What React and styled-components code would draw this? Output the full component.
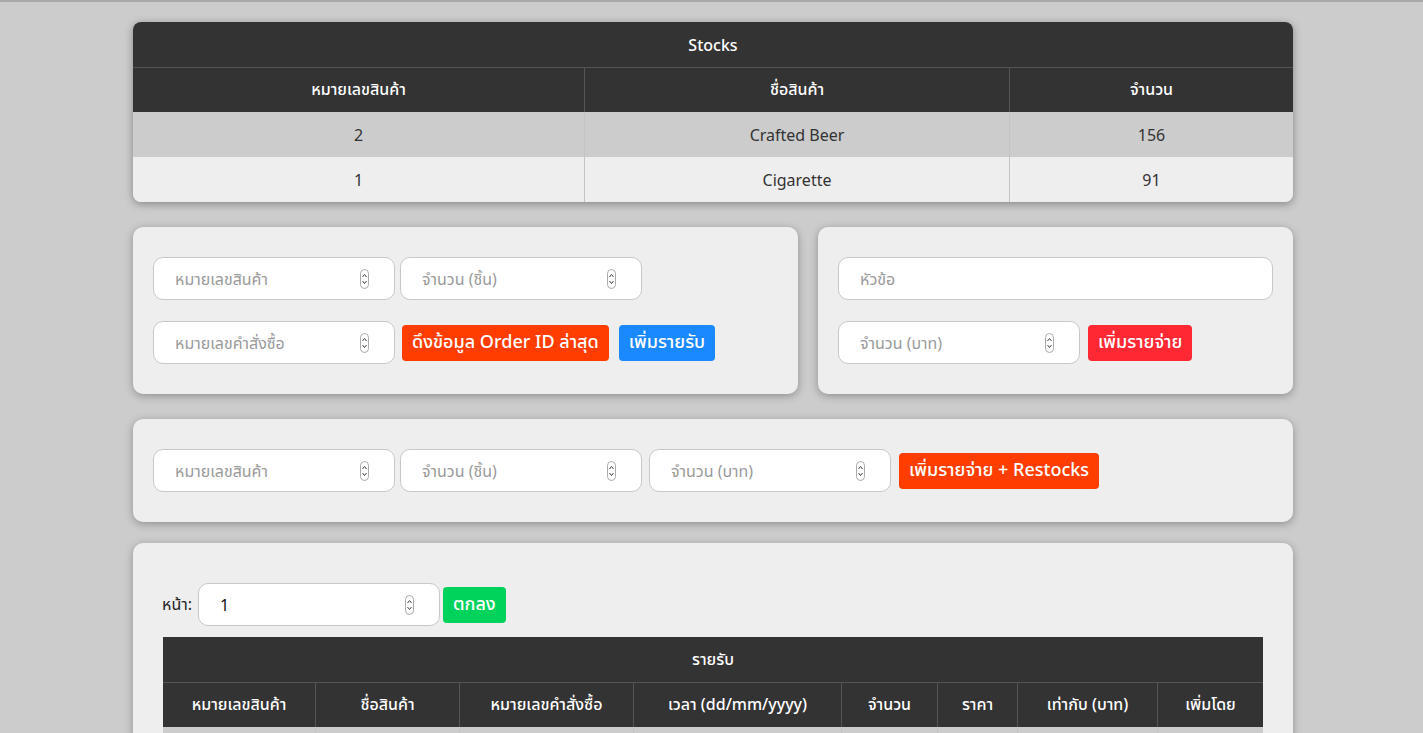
import styled, { createGlobalStyle } from "styled-components";

const GlobalStyle = createGlobalStyle`
  body {
    margin: 0;
    background: #cccccc;
    font-family: "Noto Sans", "Noto Sans Thai", "DejaVu Sans", sans-serif;
    color: #333;
  }
  * { box-sizing: border-box; }
`;

const TopLine = styled.div`
  height: 2px;
  background: #a9a9a9;
`;

const Page = styled.div`
  width: 1160px;
  margin: 20px auto 0 133px;
  display: flex;
  flex-direction: column;
  gap: 25px;
  padding-bottom: 40px;
`;

const Table = styled.table`
  width: 100%;
  border-collapse: separate;
  border-spacing: 0;
  border-radius: ${(p) => (p.$round ? "8px" : "0")};
  overflow: hidden;
  box-shadow: ${(p) => (p.$shadow ? "0 2px 8px rgba(0,0,0,0.35)" : "none")};
  font-size: 16px;
  text-align: center;
`;

const Th = styled.th`
  background: #333333;
  color: #fff;
  font-weight: 500;
  height: 45px;
  padding: 0 8px;
  border-top: ${(p) => (p.$first ? "none" : "1px solid #555")};
  border-left: ${(p) => (p.$edge ? "none" : "1px solid #555")};
  white-space: nowrap;
`;

const Td = styled.td`
  height: 45px;
  background: ${(p) => (p.$odd ? "#cccccc" : "#eeeeee")};
  border-left: ${(p) => (p.$edge ? "none" : "1px solid #c4c4c4")};
  color: #333;
`;

const Row = styled.div`
  display: flex;
  gap: 20px;
`;

const Card = styled.div`
  flex: ${(p) => p.$flex || "1"};
  margin-top: ${(p) => p.$mt || "0"};
  background: #eeeeee;
  border-radius: 10px;
  box-shadow: 0 2px 8px rgba(0, 0, 0, 0.3);
  padding: ${(p) => p.$pad || "30px 20px"};
  display: flex;
  flex-direction: column;
  gap: ${(p) => p.$gap || "21px"};
`;

const Line = styled.div`
  display: flex;
  align-items: center;
  gap: ${(p) => p.$gap || "6px"};
`;

const Field = styled.label`
  width: ${(p) => p.$w || "242px"};
  height: 43px;
  flex-shrink: 0;
  background: #fff;
  border: 1px solid #c8c8c8;
  border-radius: 10px;
  display: flex;
  align-items: center;
  padding: 0 25px 0 19px;
  margin-left: ${(p) => p.$ml || "0"};
`;

const Input = styled.input`
  flex: 1;
  min-width: 0;
  border: none;
  outline: none;
  background: transparent;
  font-family: inherit;
  font-size: 16px;
  color: #111;
  &::placeholder { color: #9a9a9a; }
`;

const Button = styled.button`
  height: 36px;
  border: none;
  border-radius: 4px;
  padding: 0 10px;
  margin-left: ${(p) => p.$ml || "0"};
  background: ${(p) => p.$bg};
  color: #fff;
  font-family: inherit;
  font-size: 18px;
  font-weight: 500;
  white-space: nowrap;
  cursor: pointer;
`;

const Label = styled.span`
  font-size: 16px;
  color: #222;
  margin-right: 6px;
`;

function Spinner() {
  return (
    <svg width="9" height="20" viewBox="0 0 9 20" fill="none">
      <rect x="0.5" y="0.5" width="8" height="19" rx="4" stroke="#aaa" fill="#fff" />
      <path d="M2.5 8 L4.5 5.5 L6.5 8" stroke="#444" strokeWidth="1" />
      <path d="M2.5 12 L4.5 14.5 L6.5 12" stroke="#444" strokeWidth="1" />
    </svg>
  );
}

function NumField({ placeholder, w, ml, value }) {
  return (
    <Field $w={w} $ml={ml}>
      <Input type="text" placeholder={placeholder} defaultValue={value} />
      <Spinner />
    </Field>
  );
}

const stocks = [
  { id: 2, name: "Crafted Beer", qty: 156 },
  { id: 1, name: "Cigarette", qty: 91 },
];

const incomeCols = [
  ["หมายเลขสินค้า", 152],
  ["ชื่อสินค้า", 144],
  ["หมายเลขคำสั่งซื้อ", 174],
  ["เวลา (dd/mm/yyyy)", 208],
  ["จำนวน", 96],
  ["ราคา", 80],
  ["เท่ากับ (บาท)", 140],
  ["เพิ่มโดย", 106],
];

export default function App() {
  return (
    <>
      <GlobalStyle />
      <TopLine />
      <Page>
        <Table $round $shadow>
          <colgroup>
            <col style={{ width: 451 }} />
            <col style={{ width: 425 }} />
            <col style={{ width: 284 }} />
          </colgroup>
          <thead>
            <tr>
              <Th colSpan={3} $first $edge>Stocks</Th>
            </tr>
            <tr>
              <Th $edge>หมายเลขสินค้า</Th>
              <Th>ชื่อสินค้า</Th>
              <Th>จำนวน</Th>
            </tr>
          </thead>
          <tbody>
            {stocks.map((s, i) => (
              <tr key={s.id}>
                <Td $odd={i % 2 === 0} $edge>{s.id}</Td>
                <Td $odd={i % 2 === 0}>{s.name}</Td>
                <Td $odd={i % 2 === 0}>{s.qty}</Td>
              </tr>
            ))}
          </tbody>
        </Table>

        <Row>
          <Card $flex="0 0 665px">
            <Line $gap="5px">
              <NumField placeholder="หมายเลขสินค้า" />
              <NumField placeholder="จำนวน (ชิ้น)" />
            </Line>
            <Line $gap="0">
              <NumField placeholder="หมายเลขคำสั่งซื้อ" />
              <Button $bg="#ff3d00" $ml="7px">ดึงข้อมูล Order ID ล่าสุด</Button>
              <Button $bg="#1a88ff" $ml="10px">เพิ่มรายรับ</Button>
            </Line>
          </Card>
          <Card>
            <Line>
              <Field $w="100%">
                <Input type="text" placeholder="หัวข้อ" />
              </Field>
            </Line>
            <Line $gap="0">
              <NumField placeholder="จำนวน (บาท)" />
              <Button $bg="#ff2833" $ml="8px">เพิ่มรายจ่าย</Button>
            </Line>
          </Card>
        </Row>

        <Card>
          <Line $gap="0">
            <NumField placeholder="หมายเลขสินค้า" />
            <NumField placeholder="จำนวน (ชิ้น)" ml="5px" />
            <NumField placeholder="จำนวน (บาท)" ml="7px" />
            <Button $bg="#ff3d00" $ml="8px">เพิ่มรายจ่าย + Restocks</Button>
          </Line>
        </Card>

        <Card $mt="-4px" $pad="40px 30px 30px 29px" $gap="11px">
          <Line $gap="0">
            <Label>หน้า:</Label>
            <NumField value="1" />
            <Button $bg="#00d35b" $ml="3px">ตกลง</Button>
          </Line>
          <Table style={{ marginLeft: 1, width: 1100 }}>
            <colgroup>
              {incomeCols.map(([t, w]) => (
                <col key={t} style={{ width: w }} />
              ))}
            </colgroup>
            <thead>
              <tr>
                <Th colSpan={8} $first $edge>รายรับ</Th>
              </tr>
              <tr>
                {incomeCols.map(([t], i) => (
                  <Th key={t} $edge={i === 0}>{t}</Th>
                ))}
              </tr>
            </thead>
            <tbody>
              <tr>
                {incomeCols.map(([t], i) => (
                  <Td key={t} $odd $edge={i === 0} />
                ))}
              </tr>
            </tbody>
          </Table>
        </Card>
      </Page>
    </>
  );
}
